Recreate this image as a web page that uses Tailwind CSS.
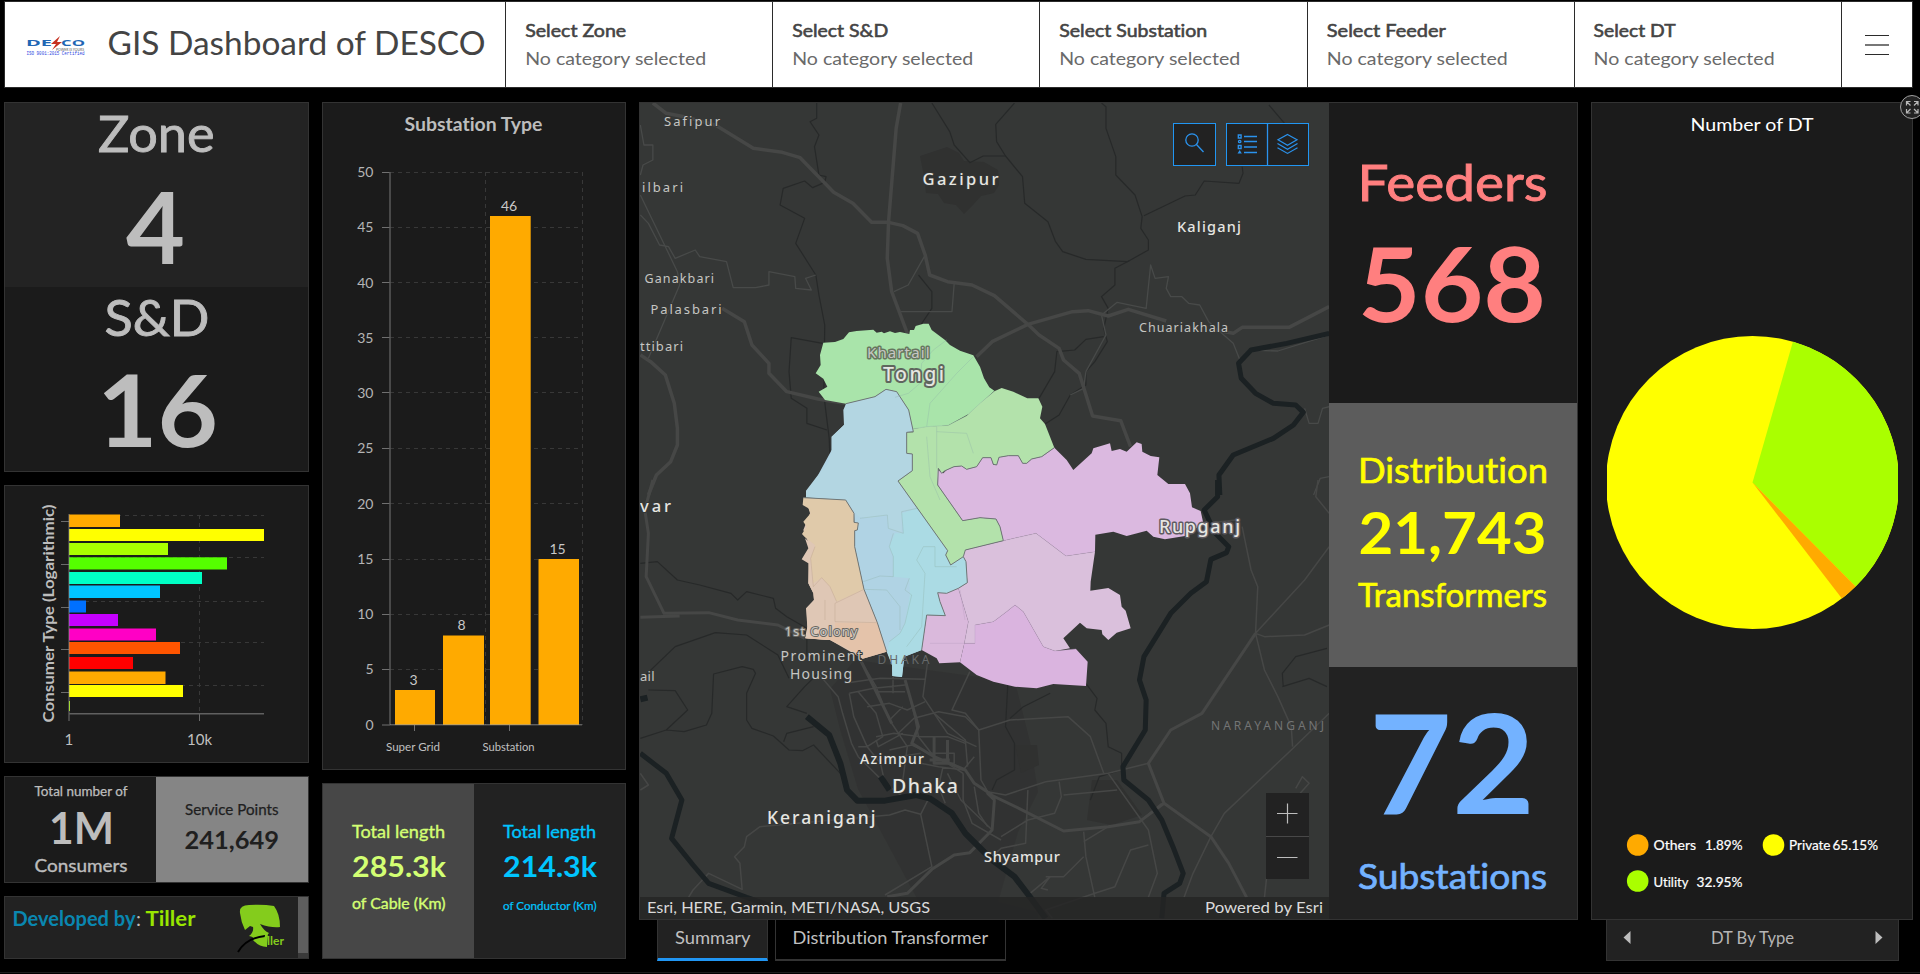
<!DOCTYPE html>
<html lang="en">
<head>
<meta charset="utf-8">
<title>GIS Dashboard of DESCO</title>
<script src="https://cdn.jsdelivr.net/npm/@tailwindcss/browser@4"></script>
</head>
<body class="bg-black">
<div class="w-[1920px] h-[974px] bg-black overflow-hidden flex flex-col font-['Lato',sans-serif] [font-variant-ligatures:none] text-[#bdbdbd] pt-px relative">

  <!-- Header -->
  <header class="ml-1 w-[1909px] h-[87px] shrink-0 bg-white border border-[#2b2b2b] flex text-[#444]">
    <div class="w-[501px] shrink-0 border-r border-[#2b2b2b] flex items-center">
      <svg class="block" width="499" height="85" viewBox="5 2 499 85">
        <text x="26" y="45.5" font-family="Open Sans" font-weight="700" font-size="9.5" fill="#2166b4" textLength="26" lengthAdjust="spacingAndGlyphs">DE</text>
        <text x="61" y="45.5" font-family="Open Sans" font-weight="700" font-size="9.5" fill="#2166b4" textLength="24" lengthAdjust="spacingAndGlyphs">CO</text>
        <path d="M60 36l-9 8h5l-4 6 10-8h-5z" fill="#c5301f"/>
        <text x="56" y="50.5" font-size="3.6" fill="#555" textLength="28" lengthAdjust="spacingAndGlyphs">POWER IS YOURS</text>
        <text x="26.500" y="55" font-family="Liberation Mono" font-size="5.200" fill="#2b3fe0" textLength="58" lengthAdjust="spacingAndGlyphs">ISO 9001:2015 Certified</text>
        <text x="107.500" y="55" font-size="33" fill="#444" textLength="378" lengthAdjust="spacingAndGlyphs">GIS Dashboard of DESCO</text>
      </svg>
    </div>
    <div class="flex-1 grid grid-cols-5">
      <div class="border-r border-[#2b2b2b] px-[19px] pt-[15px]"><svg class="block overflow-visible" width="200" height="56" viewBox="525 17 200 56"><text x="525.2" y="37" font-size="17" stroke="#444" stroke-width=".55" fill="#444" textLength="101" lengthAdjust="spacingAndGlyphs">Select Zone</text><text x="525.2" y="65" font-size="18" fill="#6a6a6a" textLength="181" lengthAdjust="spacingAndGlyphs">No category selected</text></svg></div>
      <div class="border-r border-[#2b2b2b] px-[19px] pt-[15px]"><svg class="block overflow-visible" width="200" height="56" viewBox="525 17 200 56"><text x="525.2" y="37" font-size="17" stroke="#444" stroke-width=".55" fill="#444" textLength="96" lengthAdjust="spacingAndGlyphs">Select S&amp;D</text><text x="525.2" y="65" font-size="18" fill="#6a6a6a" textLength="181" lengthAdjust="spacingAndGlyphs">No category selected</text></svg></div>
      <div class="border-r border-[#2b2b2b] px-[19px] pt-[15px]"><svg class="block overflow-visible" width="200" height="56" viewBox="525 17 200 56"><text x="525.2" y="37" font-size="17" stroke="#444" stroke-width=".55" fill="#444" textLength="148" lengthAdjust="spacingAndGlyphs">Select Substation</text><text x="525.2" y="65" font-size="18" fill="#6a6a6a" textLength="181" lengthAdjust="spacingAndGlyphs">No category selected</text></svg></div>
      <div class="border-r border-[#2b2b2b] px-[19px] pt-[15px]"><svg class="block overflow-visible" width="200" height="56" viewBox="525 17 200 56"><text x="524.8" y="37" font-size="17" stroke="#444" stroke-width=".55" fill="#444" textLength="119" lengthAdjust="spacingAndGlyphs">Select Feeder</text><text x="524.8" y="65" font-size="18" fill="#6a6a6a" textLength="181" lengthAdjust="spacingAndGlyphs">No category selected</text></svg></div>
      <div class="border-r border-[#2b2b2b] px-[19px] pt-[15px]"><svg class="block overflow-visible" width="200" height="56" viewBox="525 17 200 56"><text x="524.6" y="37" font-size="17" stroke="#444" stroke-width=".55" fill="#444" textLength="82" lengthAdjust="spacingAndGlyphs">Select DT</text><text x="524.6" y="65" font-size="18" fill="#6a6a6a" textLength="181" lengthAdjust="spacingAndGlyphs">No category selected</text></svg></div>
    </div>
    <div class="w-[70px] shrink-0 flex items-center justify-center">
      <svg width="24" height="22" viewBox="0 0 24 22"><path d="M0 1.500h24M0 20.500h24" stroke="#2b2b2b"/><path d="M0 11h24" stroke="#777" stroke-width="2"/></svg>
    </div>
  </header>

  <main class="mt-[14px] ml-1 flex gap-[13px] items-start">
    <!-- Column 1 -->
    <div class="w-[305px] flex flex-col gap-[13px]">
      <section class="h-[370px] border border-[#333]">
        <div class="h-[184px] bg-[#232323]">
          <svg class="block" width="303" height="184" viewBox="5 103 303 184" fill="#bdbdbd" stroke="#bdbdbd">
            <text x="98" y="151.700" font-size="50.500" stroke-width=".9" textLength="116.500" lengthAdjust="spacingAndGlyphs">Zone</text>
            <text x="126" y="264" font-size="100" stroke="none" font-weight="700" textLength="59" lengthAdjust="spacingAndGlyphs">4</text>
          </svg>
        </div>
        <div class="h-[184px] bg-[#1b1b1b]">
          <svg class="block" width="303" height="184" viewBox="5 287 303 184" fill="#bdbdbd" stroke="#bdbdbd">
            <text x="104.500" y="336" font-size="50.500" stroke-width=".9" textLength="105" lengthAdjust="spacingAndGlyphs">S&amp;D</text>
            <text x="97" y="447" font-size="100" stroke="none" font-weight="700" textLength="121" lengthAdjust="spacingAndGlyphs">16</text>
          </svg>
        </div>
      </section>

      <section class="h-[278px] border border-[#333] bg-[#1b1b1b]">
        <svg class="block" width="303" height="276" viewBox="5 486 303 276">
          <g stroke="#383838" stroke-dasharray="4 4">
            <path d="M69 515.500H264M69 557.500H264M69 601.500H264M69 642.500H264M69 685.500H264M199.500 515V714"/>
          </g>
          <path d="M61 521.500h8M61 564.500h8M61 607.500h8M61 649.500h8M61 692.500h8M199.500 714v7" stroke="#6b6b6b"/>
          <g>
            <rect x="69" y="514.500" width="51" height="12.500" fill="#ffaa00"/>
            <rect x="69" y="529" width="195" height="12" fill="#ffff00"/>
            <rect x="69" y="543" width="99" height="12" fill="#aaff00"/>
            <rect x="69" y="557.300" width="158" height="12.200" fill="#55ff00"/>
            <rect x="69" y="572" width="133" height="12" fill="#00ffc5"/>
            <rect x="69" y="585.500" width="91" height="12.500" fill="#00c5ff"/>
            <rect x="69" y="600.500" width="17" height="12" fill="#0070ff"/>
            <rect x="69" y="614" width="49" height="12" fill="#c500ff"/>
            <rect x="69" y="628.500" width="87" height="12" fill="#ff00c5"/>
            <rect x="69" y="642" width="111" height="12" fill="#ff5500"/>
            <rect x="69" y="657" width="64" height="12" fill="#ff0000"/>
            <rect x="69" y="671.500" width="96.500" height="12.500" fill="#ffaa00"/>
            <rect x="69" y="685" width="114" height="12" fill="#ffff00"/>
            <rect x="69" y="701" width="1" height="10" fill="#aaff00"/>
          </g>
          <path d="M69 514V721" stroke="#999" stroke-opacity=".7"/>
          <path d="M69 713.800H264" stroke="#606060" stroke-width="1.500"/>
          <g fill="#c0c0c0" font-size="15">
            <text x="64.500" y="745">1</text>
            <text x="187" y="745" textLength="25" lengthAdjust="spacingAndGlyphs">10k</text>
          </g>
          <text transform="translate(54 722.500) rotate(-90)" font-size="16" font-weight="700" fill="#bdbdbd" textLength="218" lengthAdjust="spacingAndGlyphs">Consumer Type (Logarithmic)</text>
        </svg>
      </section>

      <section class="h-[107px] border border-[#333] flex">
        <div class="w-[151px] bg-[#1b1b1b]">
          <svg class="block" width="151" height="105" viewBox="5 777 151 105" fill="#bdbdbd">
            <text x="34.500" y="795.700" font-size="12.500" stroke="#bdbdbd" stroke-width=".25" textLength="93" lengthAdjust="spacingAndGlyphs">Total number of</text>
            <text x="49" y="844" font-size="43" font-weight="700" textLength="65" lengthAdjust="spacingAndGlyphs">1M</text>
            <text x="34.500" y="872" font-size="17" stroke="#bdbdbd" stroke-width=".35" textLength="93" lengthAdjust="spacingAndGlyphs">Consumers</text>
          </svg>
        </div>
        <div class="flex-1 bg-[#858585]">
          <svg class="block" width="152" height="105" viewBox="156 777 152 105" fill="#1f1f1f">
            <text x="185" y="815" font-size="14.500" stroke="#1f1f1f" stroke-width=".25" textLength="93.500" lengthAdjust="spacingAndGlyphs">Service Points</text>
            <text x="184.500" y="849" font-size="24" font-weight="700" textLength="94.500" lengthAdjust="spacingAndGlyphs">241,649</text>
          </svg>
        </div>
      </section>

      <section class="h-[63px] border border-[#333] bg-[#222] flex">
        <svg class="block" width="293" height="61" viewBox="5 897 293 61">
          <text x="12.500" y="925.700" font-size="20" font-weight="700" fill="#0a87b0" textLength="123" lengthAdjust="spacingAndGlyphs">Developed by</text>
          <text x="136" y="925.700" font-size="20" fill="#bdbdbd">:</text>
          <text x="145.500" y="925.700" font-size="21.500" font-weight="700" fill="#98e600" textLength="50" lengthAdjust="spacingAndGlyphs">Tiller</text>
          <path d="M240 913q-1-8 9-8 14-1 25 1 6 8 6 21-9 1-20-3 4 7 9 9-2 2-1 3-1 8-1 11-8 0-14-7 2-3-4-4 5-4 4-9l-3-1-5 4q-4-8-5-17z" fill="#84cc1c"/>
          <path d="M238 952q8-14 27-16" fill="none" stroke="#000" stroke-width="2"/>
          <text x="264" y="945" font-size="11" font-weight="700" fill="#84cc1c" textLength="20" lengthAdjust="spacingAndGlyphs">iller</text>
        </svg>
        <div class="w-[10px] bg-[#3a3a3a]"><div class="h-[56px] bg-[#5e5e5e]"></div></div>
      </section>
    </div>

    <!-- Column 2 -->
    <div class="w-[304px] flex flex-col gap-[13px]">
      <section class="h-[668px] border border-[#333] bg-[#1b1b1b]">
        <svg class="block" width="302" height="666" viewBox="323 103 302 666">
          <text x="404.500" y="130.700" font-size="18" font-weight="700" fill="#bdbdbd" textLength="138" lengthAdjust="spacingAndGlyphs">Substation Type</text>
          <path stroke="#383838" stroke-dasharray="4 4" d="M390 172.500H582M390 227.500H582M390 282.500H582M390 337.500H582M390 392.500H582M390 448.500H582M390 503.500H582M390 559.500H582M390 614.500H582M390 669.500H582M485.500 172V725M582.500 172V725"/>
          <path stroke="#707070" d="M382 172.500h8M382 227.500h8M382 282.500h8M382 337.500h8M382 392.500h8M382 448.500h8M382 503.500h8M382 559.500h8M382 614.500h8M382 669.500h8M382 725h8M414.500 725v6M509.500 725v6"/>
          <path stroke="#5a5a5a" stroke-width="1.500" d="M390 172V725"/>
          <g fill="#ffaa00">
            <rect x="395" y="690" width="40" height="35"/>
            <rect x="443" y="635.500" width="41" height="89.500"/>
            <rect x="490" y="216" width="40.700" height="509"/>
            <rect x="538.500" y="559" width="40.500" height="166"/>
          </g>
          <path stroke="#999" stroke-opacity=".8" d="M390 724.800H582"/>
          <g font-size="14" fill="#b5b5b5" text-anchor="end">
            <text x="373.500" y="177.200">50</text><text x="373.500" y="232.300">45</text><text x="373.500" y="287.500">40</text><text x="373.500" y="342.500">35</text><text x="373.500" y="397.500">30</text><text x="373.500" y="453">25</text><text x="373.500" y="508.500">20</text><text x="373.500" y="564">15</text><text x="373.500" y="619">10</text><text x="373.500" y="674.300">5</text><text x="373.500" y="729.500">0</text>
          </g>
          <g font-size="14" fill="#c8c8c8" text-anchor="middle">
            <text x="413.500" y="685">3</text><text x="461.500" y="630">8</text><text x="509" y="211">46</text><text x="557.500" y="554">15</text>
          </g>
          <g font-size="11" fill="#c0c0c0">
            <text x="386" y="751" textLength="54" lengthAdjust="spacingAndGlyphs">Super Grid</text>
            <text x="482.500" y="751" textLength="52" lengthAdjust="spacingAndGlyphs">Substation</text>
          </g>
        </svg>
      </section>
      <section class="h-[176px] border border-[#333] flex">
        <div class="w-[151px] bg-[#474747]">
          <svg class="block" width="151" height="174" viewBox="323 784 151 174" fill="#d3ff73">
            <text x="352" y="838.300" font-size="17" stroke="#d3ff73" stroke-width=".35" textLength="93" lengthAdjust="spacingAndGlyphs">Total length</text>
            <text x="352" y="877.300" font-size="29" font-weight="700" textLength="94" lengthAdjust="spacingAndGlyphs">285.3k</text>
            <text x="352" y="909.300" font-size="14.500" stroke="#d3ff73" stroke-width=".35" textLength="93.500" lengthAdjust="spacingAndGlyphs">of Cable (Km)</text>
          </svg>
        </div>
        <div class="flex-1 bg-[#222]">
          <svg class="block" width="151" height="174" viewBox="474 784 151 174" fill="#00c5ff">
            <text x="503" y="838.300" font-size="17" stroke="#00c5ff" stroke-width=".35" textLength="93" lengthAdjust="spacingAndGlyphs">Total length</text>
            <text x="503" y="877.300" font-size="29" font-weight="700" textLength="94" lengthAdjust="spacingAndGlyphs">214.3k</text>
            <text x="503" y="910" font-size="11" stroke="#00c5ff" stroke-width=".2" textLength="93.500" lengthAdjust="spacingAndGlyphs">of Conductor (Km)</text>
          </svg>
        </div>
      </section>
    </div>

    <!-- Map and indicators -->
    <div class="w-[939px] flex flex-col">
      <section class="h-[818px] border border-[#333] flex">
        <div class="w-[689px] relative">
          <svg class="block" width="689" height="816" viewBox="640 103 689 816">
            <rect x="640" y="103" width="689" height="816" fill="#353736"/>
            <!-- urban areas -->
            <g fill="#303130">
              <path d="M920 156l27-9 12 6 5 8 20 1 14 8 1 15-5 8-13 3-8 9-9 9-8-9-12-2-6-9-12-1-2-17z"/>
              <path d="M855 660l160 22 15 60 8 50-20 40-20 70 40 10 0 7-110 0-70-130-18-60-10-40z" opacity=".7"/>
              <path d="M1015 745h22l2 20-18 8zM1092 780h25l25 35-30 10-25-5z"/>
            </g>
            <!-- northern roads -->
            <g transform="translate(635 95) scale(.446429 .333333)" fill="none" stroke-linejoin="round">
              <g stroke="#272929" stroke-width="1.200">
                <path vector-effect="non-scaling-stroke" d="M407 24V70L392 80L412 120L402 155L412 240L428 245L425 262L398 278L380 258L332 280L325 330L380 370L360 445L405 540L412 600L425 690L423 900L435 1030L440 1200"/>
                <path vector-effect="non-scaling-stroke" d="M665 24L705 110L715 150L750 203L780 183L830 183L868 245L873 325L925 380L942 440L958 470L1010 493L1103 500L1150 465L1150 435L1133 400L1136 365L1120 300L1077 240L1077 185L1055 100L1055 35L1045 24"/>
                <path vector-effect="non-scaling-stroke" d="M850 24L808 88L810 140L830 183M1420 30L1455 85M1360 215L1362 235L1353 265L1275 258L1255 300L1232 303L1140 362"/>
                <path vector-effect="non-scaling-stroke" d="M1107 497L1075 520V570L1045 605L1060 640L1050 700L1058 740L1030 800L1010 830L1010 870L975 900L950 960L915 990M635 540L665 590L665 640L640 690M1050 725L1010 733L985 765L945 770L940 830L905 910M420 745L350 728L345 830L350 910L385 940V985L430 1005"/>
              </g>
              <g stroke="#484a49" stroke-width="1.300">
                <path vector-effect="non-scaling-stroke" d="M12 90L20 150H40V195L18 210L12 240M12 300L95 530L100 570L30 790M12 360L30 385L55 450L75 455L90 490L135 465L145 485L205 500L220 578H270L300 570L300 530L358 545L360 580L395 585L382 550L405 540"/>
                <path vector-effect="non-scaling-stroke" d="M1045 660L1080 622L1145 640L1155 510L1165 550L1195 545L1190 580L1200 605L1225 605L1240 625L1265 630L1285 680L1340 745L1355 795M1355 795L1375 765L1440 768L1555 720M1500 940L1510 985H1530L1540 940L1555 935M1555 1145L1535 1150L1520 1200"/>
                <path vector-effect="non-scaling-stroke" d="M648 485L612 570L580 590M715 565L710 650H660L595 650"/>
                <path vector-effect="non-scaling-stroke" d="M1045 660L1055 720L1010 830L1005 880L975 900"/>
              </g>
              <g stroke="#464746" stroke-width="3.500">
                <path vector-effect="non-scaling-stroke" d="M40 24L70 55L110 65L180 90L265 160L330 172L370 188L445 292L488 325L530 382H568L600 392L633 415L650 480L660 540L700 560L755 570L805 602L880 688L905 720L950 760L960 795L995 835L1025 963L1088 977L1110 1055"/>
                <path vector-effect="non-scaling-stroke" d="M595 24L585 100L568 380L565 490L575 590L610 715M765 785L800 740L880 688L980 650L1015 647L1060 663L1105 643L1190 678M1300 705L1340 715L1360 697H1465L1555 635"/>
                <path vector-effect="non-scaling-stroke" d="M195 640L245 680L262 750L300 805V835L340 890L410 912L470 925M12 780L35 800L68 840L88 925L95 1000V1050L80 1100L48 1140L30 1200"/>
              </g>
              <path vector-effect="non-scaling-stroke" d="M1555 715L1460 745L1380 765L1352 805L1358 850L1390 895L1430 925L1480 930L1497 952L1475 990L1430 1030L1340 1080L1308 1140L1310 1200" stroke="#1b2123" stroke-width="5"/>
            </g>
            <!-- southern roads -->
            <g transform="translate(635 480) scale(.446429 .333333)" fill="none" stroke-linejoin="round">
              <g stroke="#272929" stroke-width="1.200">
                <path vector-effect="non-scaling-stroke" d="M12 250L50 245L95 300L145 315L215 340L230 360L250 335L310 355L315 385L340 410L385 445V530M12 775L70 750L110 755L160 735L172 700L176 582L240 560L265 568L270 580L250 640V720L262 745L310 768L345 810L375 812L400 795L460 880M385 700L340 680L380 620L410 580M400 740L340 760L333 785M30 630L90 632L118 690L70 750M12 600L90 500L180 458L250 465L320 525L345 595"/>
                <path vector-effect="non-scaling-stroke" d="M835 615L830 740L850 790V870L810 900L800 930M930 640L870 680L840 715M1010 610L1035 655L1030 690L1055 730L1060 800L1090 820L1090 870L1040 890L1020 960M1452 620L1450 580L1480 530L1550 505M1450 620L1510 595L1550 620"/>
              </g>
              <g stroke="#464746" stroke-width="1.500">
                <path vector-effect="non-scaling-stroke" d="M12 880L30 915L12 930M120 1252L130 1230L165 1180L240 1228L235 1150L223 1130L245 1100L250 1070L280 1040L400 1025L570 1005L605 990L640 1003L658 955M640 1003L665 1160L560 1245"/>
                <path vector-effect="non-scaling-stroke" d="M410 580L455 650L465 700L485 790L500 830L560 910L600 950M470 610L520 600L550 595L650 598M480 640L535 625L605 615M505 540L540 620L570 720L610 800L600 900M540 635H605M578 590V640M605 600L625 700L635 770L670 830L700 850L735 880M655 550L645 650L670 700L740 780L745 860M750 575L710 690L740 700L770 750L775 900L790 935M480 640L490 710L520 800L550 850L560 910M500 635L540 700L555 770L520 800L500 800"/>
                <path vector-effect="non-scaling-stroke" d="M520 680L570 670L610 690L650 665M570 720L600 680M590 760L625 715L680 695L740 710L770 750L840 720L910 715L970 710L1020 770L1050 880M540 770L580 760L640 770L700 770L740 790M570 810L620 795L660 820H715V850H670V810M590 830L640 820M540 780L545 800L600 760M670 700L700 760L765 800M640 850L680 860L735 870L760 830M690 860L680 920L695 970M700 880L730 960L800 1050"/>
                <path vector-effect="non-scaling-stroke" d="M735 880L735 960L755 1030L820 1080M760 920L770 1000L790 1040M790 935L830 945L920 905L1060 880L1150 850M950 905L955 950L940 1000L880 1020L820 1070M880 930L875 1090L820 1105L790 1140M960 945L1080 930M1060 880L1150 1050L1170 1180L1150 1252M1005 1055L1010 1130L1030 1252M1150 1095L1110 1110L1075 1220L1030 1240L920 1290L935 1315M1005 1085L1060 1040L1130 1025L1180 970M920 1190L960 1190L1005 1130"/>
                <path vector-effect="non-scaling-stroke" d="M1360 140L1380 270L1395 320L1390 460L1410 570L1440 650L1470 740L1473 800M1555 200L1500 300L1390 460L1410 470L1500 465L1555 435M1555 700L1470 810L1320 1000L1290 1070L1250 1180L1230 1252M1530 0L1525 50L1555 100M1480 925L1495 890L1510 910L1490 940M1410 1252L1415 1190M1280 130L1345 120M885 1240L930 1190L910 1225L925 1230"/>
              </g>
              <g stroke="#464746" stroke-width="3">
                <path vector-effect="non-scaling-stroke" d="M40 0L22 90L30 160L25 290L65 400L165 398L230 420L320 435L380 475M12 412L100 408M1390 460L1310 620L1270 700L1200 750L1150 850L1185 970L1290 1070L1330 1150L1370 1252M565 1250L610 1240L665 1168L715 1125L750 1118L800 1050L805 960L790 940L860 985L960 1053L1060 1040L1130 1025L1185 970"/>
                <path vector-effect="non-scaling-stroke" d="M505 540L540 635L575 730M605 600L635 740L620 790L670 830L740 870L760 910L800 945M670 770V850H700V780M660 840H705"/>
              </g>
              <g stroke="#1b2123" stroke-width="5">
                <path vector-effect="non-scaling-stroke" d="M385 710L435 765L460 850L475 930L498 962H560L630 945L660 955L710 1000L740 1060L800 1140L850 1190L890 1260L920 1315" stroke-width="6"/>
                <path vector-effect="non-scaling-stroke" d="M12 820L70 880L105 960L82 1075L130 1155L165 1210L250 1252L300 1275"/>
                <path vector-effect="non-scaling-stroke" d="M1305 0L1305 50L1275 90L1300 160L1330 200L1325 218L1290 238L1280 305L1245 340L1200 400L1140 530L1130 600L1145 660L1143 750L1093 860L1095 900L1150 960L1180 1020L1205 1100L1228 1180L1220 1210L1185 1240L1180 1315"/>
                <path vector-effect="non-scaling-stroke" d="M550 890L570 930M12 658L28 653" stroke-width="6"/>
              </g>
            </g>
            <!-- service zones -->
            <g transform="translate(780 300) scale(.333333)" stroke-linejoin="round">
              <path fill="#b0d3e4" d="M198 311L285 290L318 268L350 275L386 330L400 395L380 397V460L397 462V512L354 543L503 752L497 765L512 795L550 770L558 785L562 848L535 865L500 880L473 878L480 905L496 947L440 945L425 1050L373 1070L366 1131L337 1128L336 1095L320 1055L292 968L252 868L224 740V690L222 640L197 600L78 592L155 450V410L192 375Z"/>
              <path fill="#dfc7b5" d="M78 593L197 600L222 640L224 740L252 868L292 968L320 1055L248 1076L150 1020L78 1015L82 980L80 925L102 900L100 880L85 850L90 740L70 690L90 640Z"/>
              <path fill="#a9e4aa" d="M130 128L165 126L190 117L207 97L230 93L280 89L290 98L305 95L312 100L330 94L345 99L360 96L388 102L390 90L402 90L407 78L430 71H446L455 90L495 120L510 135L540 152L580 166L600 200L612 235L628 262L643 272L570 340L505 376L398 387L386 330L350 275L318 268L285 290L198 311L135 300L116 275L142 260L130 236L107 220L122 195L120 165Z"/>
              <path fill="#b3e2ab" d="M643 274L665 264L700 275L742 295H775L787 320L780 355L795 372L823 443L785 470L755 477L740 490H728L715 467H685L657 472L650 495L640 493L633 473H608L590 500L560 508L545 498L522 500L495 512L485 520L475 505L473 555L548 662L600 653L648 657L660 680L670 722L556 750L553 770L512 795L497 765L503 752L354 543L397 512V462L380 460V397H400L398 387L440 380L505 376L560 347L600 310Z"/>
              <path fill="#dbb9e0" d="M473 555V510L490 520L500 510L522 500L545 498L560 508L590 500L608 473H633L640 495H650L657 472L685 467H715L728 490H740L755 477L785 470L823 443L860 480L880 510L935 460L940 445L990 430L995 453L1020 447L1040 455L1070 427L1085 432L1087 455L1112 468L1138 472L1132 525L1165 552H1215L1230 580L1236 622L1262 633L1270 670L1215 708L1155 718L1120 710L1100 692L1040 708L1000 695L946 704L945 755L858 768L768 700L670 722L660 680L648 657L600 653L548 662Z"/>
              <path fill="#dac0dc" d="M670 722L768 700L858 768L945 755L932 845L931 872L985 864L1020 885L1025 920L1037 932L1052 985L1010 998L985 1020L967 1003L965 990L920 985L900 968L850 1015L870 1045L825 1053L790 1040L730 935L705 915L680 935L640 965L585 975V1030H553L565 965L535 865L562 848L558 785L550 770L556 750Z"/>
              <path fill="#dab9dc" d="M473 878L535 865L565 965L553 1030L540 1087L478 1090L470 1075L425 1050L440 945L496 947L480 905Z"/>
              <path fill="#dab4df" d="M585 975L640 965L680 935L705 915L730 935L790 1040L825 1053L888 1047L923 1085L918 1158L820 1152L770 1165L705 1160L640 1145L590 1125L540 1087L553 1030H585Z"/>
              <path fill="#b3d6e2" d="M198 311L285 290L318 268L350 275L386 330L400 395L380 397V460L397 462V512L354 543L412 625L365 635L365 700L325 685L322 645L270 655L235 650L220 630L197 600L78 592V572L110 530L145 490L155 450V410L192 375L190 330Z"/>
              <path fill="#abdbe4" d="M365 640L412 625L503 752L497 765L512 795L550 770L558 785L562 848L535 865L500 880L473 878L480 905L496 947L440 945L425 1050L373 1070L370 1095L366 1131L337 1128L336 1095L322 1055L328 1025L360 1000L375 970L390 885L388 835L340 830V770L328 740L345 700L370 700Z"/>
              <path fill="#e0caaa" d="M70 593L197 600L222 640V667L235 669L232 690L224 692V740L252 868L170 905L150 860L125 833L100 850L92 770L105 735L75 712L66 702L80 680L70 665L92 640L85 625L68 615Z"/>
              <path fill="#dfc7b5" d="M75 715L105 740L92 775L100 860L125 833L150 860L170 905L252 868L292 968L210 975L165 965L165 1010L140 1020L75 1015L82 980L78 925L102 900L100 880L85 850V790L65 778L85 745Z"/>
              <path fill="#e4c3aa" d="M165 968L292 968L320 1055L248 1076L210 1050L150 1020L75 1015L165 1005Z"/>
              <g fill="none" stroke="#6f7676" stroke-width="3">
                <path d="M198 311L285 290L318 268L350 275L386 330L400 395L380 397V460L397 462V512L354 543L503 752L497 765L512 795L550 770L558 785L562 848L535 865L500 880L473 878L480 905L496 947L440 945L425 1050"/>
                <path d="M823 443L785 470L755 477L740 490H728L715 467H685L657 472L650 495L640 493L633 473H608L590 500L560 508L545 498L522 500L495 512L485 520L475 505L473 555L548 662L600 653L648 657L660 680L670 722L556 750L550 770"/>
                <path d="M70 593L197 600L222 640V667L235 669L232 690L224 692V740L252 868L292 968L320 1055"/>
              </g>
              <g fill="none" stroke="#8fb0a8" stroke-opacity=".35" stroke-width="3">
                <path d="M398 387L440 380L505 376L560 347L600 310L643 274M470 380V505M500 120L460 150L425 190L420 250L385 280L345 292M580 170L530 220L450 310L440 380M440 410L450 530L480 600M470 395L560 400L580 460"/>
                <path d="M670 722L768 700L858 768L945 755M535 865L565 965L553 1030H585V975L640 965L705 915L730 935L790 1040L825 1053L888 1047M450 1030H553M540 870L555 960" stroke="#b79cc0"/>
                <path d="M412 625L365 635L370 700L325 685L322 645L240 655M340 700L328 740L340 770V830L300 828L250 845M388 835L375 870L395 885L375 970L360 1000L328 1025M430 740L410 780L435 820L425 980L380 1040M430 740H465V800H530M250 868L320 870L360 920V990"/>
                <path d="M252 868L165 910V965L292 968M105 740L92 775L100 860L125 833L150 860L170 905M135 900V960" stroke="#b79c84"/>
              </g>
            </g>
            <!-- place labels -->
            <g font-family="Noto Sans" paint-order="stroke" stroke="#353736" stroke-width="2" stroke-linejoin="round" fill="#c6c6c3" font-size="13">
              <text x="664" y="126" textLength="56">Safipur</text>
              <text x="642" y="191.700" textLength="41">ilbari</text>
              <text x="644.500" y="283" font-size="12.500" textLength="69.500">Ganakbari</text>
              <text x="650.500" y="314.300" textLength="71">Palasbari</text>
              <text x="640" y="351" textLength="43">ttibari</text>
              <text x="1139" y="332" font-size="12.500" textLength="89">Chuariakhala</text>
              <text x="640" y="681" textLength="14.500">ail</text>
              <text x="784.500" y="635.700" stroke="#6b6862" textLength="73">1st Colony</text>
              <text x="780.500" y="661" font-size="14" textLength="81.500">Prominent</text>
              <text x="790" y="679" font-size="14" textLength="62">Housing</text>
              <text x="867" y="358" font-size="15" stroke="#66775f" stroke-width="3" textLength="62.500">Khartail</text>
            </g>
            <g font-family="Noto Sans" font-weight="500" paint-order="stroke" stroke="#353736" stroke-width="2" stroke-linejoin="round" fill="#e6e6e2">
              <text x="922.500" y="185" font-size="16.500" textLength="76">Gazipur</text>
              <text x="1177" y="231.700" font-size="14.500" textLength="64">Kaliganj</text>
              <text x="883" y="381" font-size="19.500" stroke="#5f665e" stroke-width="4" textLength="61">Tongi</text>
              <text x="1159" y="532.700" font-size="18" stroke="#5e5a60" stroke-width="3" textLength="81">Rupganj</text>
              <text x="640" y="512" font-size="16.500" textLength="31">var</text>
              <text x="860" y="764" font-size="14" textLength="64">Azimpur</text>
              <text x="892" y="792.700" font-size="19.500" textLength="66">Dhaka</text>
              <text x="767" y="824" font-size="17.500" textLength="108.500">Keraniganj</text>
              <text x="984" y="861.700" font-size="14.500" textLength="76">Shyampur</text>
            </g>
            <g font-family="Noto Sans" fill="#737474" font-size="12">
              <text x="877.500" y="664" textLength="52" fill="#66696a">DHAKA</text>
              <text x="1211" y="730" textLength="113">NARAYANGANJ</text>
            </g>
            <!-- attribution -->
            <rect x="640" y="897" width="689" height="22" fill="#242424" fill-opacity=".82"/>
            <g font-size="16" fill="#dadada">
              <text x="647" y="913" textLength="283" lengthAdjust="spacingAndGlyphs">Esri, HERE, Garmin, METI/NASA, USGS</text>
              <text x="1205" y="913" textLength="118" lengthAdjust="spacingAndGlyphs">Powered by Esri</text>
            </g>
          </svg>
          <!-- map tools -->
          <div class="absolute left-[533px] top-[20px] size-[43px] border border-[#2196f3] bg-[#222]">
            <svg class="block" width="41" height="41" viewBox="1174 124 41 41" fill="none" stroke="#2b93ee" stroke-width="1.300"><circle cx="1192" cy="140" r="6.200"/><path d="M1196.500 144.500l7 7.500"/></svg>
          </div>
          <div class="absolute left-[586px] top-[20px] w-[83px] h-[43px] border border-[#2196f3] bg-[#222]">
            <svg class="block" width="81" height="41" viewBox="1227 124 81 41" fill="none" stroke="#2b93ee" stroke-width="1.300"><path d="M1267.500 124v41M1244 136.500h13M1244 141.500h13M1244 147h13M1244 152.500h13"/><path d="M1238.300 135h2.800v3h-2.800zM1238.300 145.500h2.800v3h-2.800z"/><circle cx="1239.700" cy="141.500" r="1.200"/><path d="M1237.500 153.500h4.300l-2.100-3.500z" fill="#2b93ee" stroke="none"/><path d="M1287.500 134.500l9.500 5.300-9.500 5.400-9.500-5.400zM1277.500 143.500l10 5.700 10-5.700M1277.500 147.700l10 5.700 10-5.700" stroke-width="1.200"/></svg>
          </div>
          <div class="absolute left-[626px] top-[690px] w-[43px] h-[86px] bg-[#222]">
            <svg class="block" width="43" height="86" viewBox="0 0 43 86" fill="none" stroke="#bdbdbd" stroke-width="1.200"><path d="M11 20.500h20.500M21.500 10.500v20M11 64.500h20.500"/><path d="M0 43.500h43" stroke="#484848"/></svg>
          </div>
        </div>
        <div class="flex-1">
          <div class="h-[300px] bg-[#1b1b1b]">
            <svg class="block" width="248" height="300" viewBox="1329 103 248 300" fill="#ff7f7f">
              <text x="1357.500" y="200.700" font-size="50.500" stroke="#ff7f7f" stroke-width=".9" textLength="190" lengthAdjust="spacingAndGlyphs">Feeders</text>
              <text x="1358" y="321.700" font-size="104" font-weight="700" textLength="188" lengthAdjust="spacingAndGlyphs">568</text>
            </svg>
          </div>
          <div class="h-[264px] bg-[#5c5c5c]">
            <svg class="block" width="248" height="264" viewBox="1329 403 248 264" fill="#ffff00">
              <text x="1358" y="482.700" font-size="34.500" stroke="#ffff00" stroke-width=".7" textLength="190" lengthAdjust="spacingAndGlyphs">Distribution</text>
              <text x="1358.500" y="554" font-size="58" font-weight="700" textLength="188" lengthAdjust="spacingAndGlyphs">21,743</text>
              <text x="1358" y="606.500" font-size="33" stroke="#ffff00" stroke-width=".7" textLength="189" lengthAdjust="spacingAndGlyphs">Transformers</text>
            </svg>
          </div>
          <div class="h-[252px] bg-[#222]">
            <svg class="block" width="248" height="252" viewBox="1329 667 248 252" fill="#73b2ff">
              <text x="1369" y="813.700" font-size="137" font-weight="700" textLength="166" lengthAdjust="spacingAndGlyphs">72</text>
              <text x="1358" y="889.300" font-size="34.500" stroke="#73b2ff" stroke-width=".7" textLength="189" lengthAdjust="spacingAndGlyphs">Substations</text>
            </svg>
          </div>
        </div>
      </section>
      <nav class="flex gap-[7px] ml-[18px] h-[41px]">
        <div class="w-[111px] bg-[#222] border-x border-x-[#333] border-b-[3px] border-b-[#2196f3]">
          <svg class="block" width="109" height="38" viewBox="658 920 109 38"><text x="675" y="943.700" font-size="17" fill="#c0c0c0" textLength="75.500" lengthAdjust="spacingAndGlyphs">Summary</text></svg>
        </div>
        <div class="w-[231px] border-x border-b-2 border-[#333]">
          <svg class="block" width="229" height="38" viewBox="776 920 229 38"><text x="792.500" y="943.700" font-size="17" fill="#c0c0c0" textLength="195.500" lengthAdjust="spacingAndGlyphs">Distribution Transformer</text></svg>
        </div>
      </nav>
    </div>

    <!-- Transformer pie -->
    <div class="w-[322px] flex flex-col">
      <section class="h-[818px] border border-[#333] bg-[#1b1b1b]">
        <svg class="block" width="320" height="816" viewBox="1592 103 320 816">
          <text x="1690.500" y="130.700" font-size="18" fill="#fff" textLength="123" lengthAdjust="spacingAndGlyphs">Number of DT</text>
          <clipPath id="pieArea"><rect x="1607" y="300" width="291" height="360"/></clipPath>
          <g clip-path="url(#pieArea)">
            <circle cx="1752.500" cy="482.500" r="146.500" fill="#ffff00"/>
            <path d="M1752.500 482.500L1792.900 341.700A146.500 146.500 0 0 1 1855.600 586.500Z" fill="#aaff00"/>
            <path d="M1752.500 482.500L1855.600 586.500A146.500 146.500 0 0 1 1841.900 598.600Z" fill="#ffaa00"/>
          </g>
          <circle cx="1637.700" cy="845" r="10.800" fill="#ffaa00"/>
          <circle cx="1773.500" cy="845" r="10.800" fill="#ffff00"/>
          <circle cx="1637.700" cy="881" r="10.800" fill="#aaff00"/>
          <g font-size="13.500" fill="#fff" stroke="#fff" stroke-width=".2">
            <text x="1653.500" y="850" textLength="42.500" lengthAdjust="spacingAndGlyphs">Others</text>
            <text x="1705" y="850" textLength="37.500" lengthAdjust="spacingAndGlyphs">1.89%</text>
            <text x="1789" y="850" textLength="41.500" lengthAdjust="spacingAndGlyphs">Private</text>
            <text x="1832.500" y="850" textLength="45.500" lengthAdjust="spacingAndGlyphs">65.15%</text>
            <text x="1653.500" y="886.500" textLength="35" lengthAdjust="spacingAndGlyphs">Utility</text>
            <text x="1696.500" y="886.500" textLength="46" lengthAdjust="spacingAndGlyphs">32.95%</text>
          </g>
        </svg>
      </section>
      <div class="mx-auto w-[293px] h-[41px] bg-[#222] border border-t-0 border-[#333]">
        <svg class="block" width="291" height="40" viewBox="1606 920 291 40">
          <path d="M1629.500 931v13l-7-6.500zM1874.500 931v13l7-6.500z" fill="#bdbdbd"/>
          <text x="1710" y="944" font-size="17" fill="#b5b5b5" textLength="83" lengthAdjust="spacingAndGlyphs">DT By Type</text>
        </svg>
      </div>
    </div>
  </main>

  <!-- expand button over the panel corner -->
  <svg class="absolute left-[1899px] top-[94px]" width="21" height="26" viewBox="1899 94 21 26" fill="none">
    <circle cx="1912" cy="107" r="11.500" fill="#222" stroke="#a0a0a0"/>
    <path d="M1906.500 105.500v-4h4M1906.500 101.500l4 4M1914 101.500h4v4M1918 101.500l-4 4M1906.500 109v4h4M1906.500 113l4-4M1914 113h4v-4M1918 113l-4-4" stroke="#b8b8b8" stroke-width="1.200"/>
  </svg>
  <div class="absolute left-0 bottom-px w-full h-px bg-[#1c1c1c]"></div>
</div>
</body>
</html>
